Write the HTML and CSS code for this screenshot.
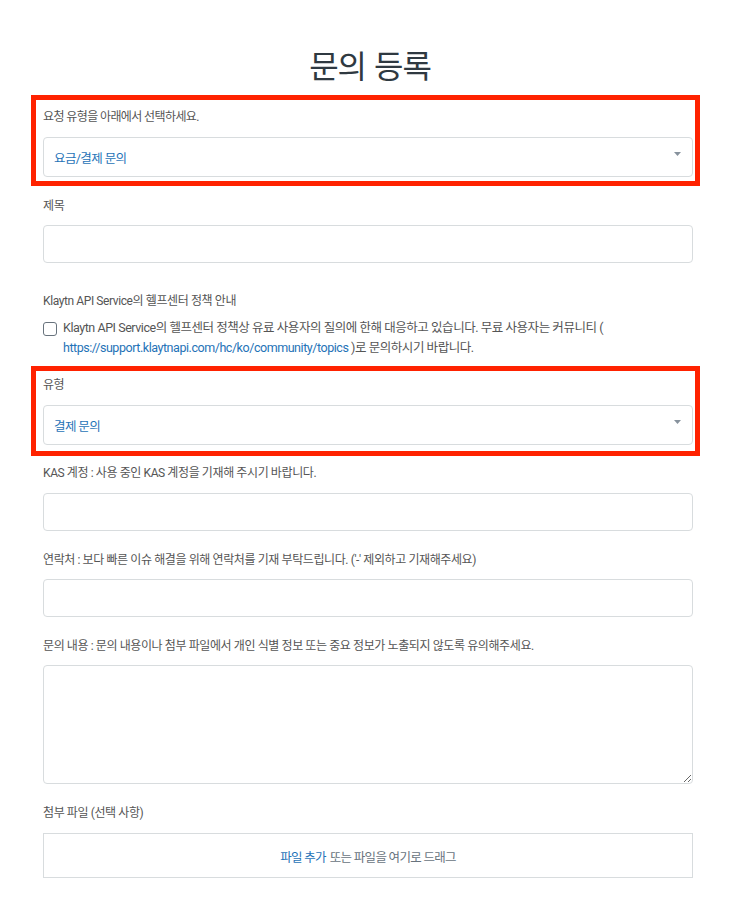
FILE: index.html
```html
<!DOCTYPE html>
<html lang="ko">
<head>
  <meta charset="UTF-8" />
  <meta name="viewport" content="width=device-width, initial-scale=1.0"/>
  <title>문의 등록</title>
  <link rel="stylesheet" href="styles.css">
</head>
<body>

  <h1 class="title">문의 등록</h1>

  <form class="request-form">

    <div class="field marked first-mark">
      <label class="field-label">요청 유형을 아래에서 선택하세요.</label>
      <div class="select">
        <span>요금/결제 문의</span>
        <svg class="caret" width="7" height="4" viewBox="0 0 7 4"><path d="M0 0h7L3.5 4z" fill="#87929d"/></svg>
      </div>
    </div>

    <div class="field after-mark">
      <label class="field-label">제목</label>
      <input type="text" class="text-input" />
    </div>

    <div class="field policy">
      <label class="field-label">Klaytn API Service의 헬프센터 정책 안내</label>
      <div class="check-row">
        <span class="checkbox"></span>
        <p class="check-text">Klaytn API Service의 헬프센터 정책상 유료 사용자의 질의에 한해 대응하고 있습니다. 무료 사용자는 커뮤니티 ( <a href="#">https://support.klaytnapi.com/hc/ko/community/topics</a> )로 문의하시기 바랍니다.</p>
      </div>
    </div>

    <div class="field marked second-mark">
      <label class="field-label">유형</label>
      <div class="select">
        <span>결제 문의</span>
        <svg class="caret" width="7" height="4" viewBox="0 0 7 4"><path d="M0 0h7L3.5 4z" fill="#87929d"/></svg>
      </div>
    </div>

    <div class="field after-mark">
      <label class="field-label">KAS 계정 : 사용 중인 KAS 계정을 기재해 주시기 바랍니다.</label>
      <input type="text" class="text-input" />
    </div>

    <div class="field">
      <label class="field-label">연락처 : 보다 빠른 이슈 해결을 위해 연락처를 기재 부탁드립니다. ('-' 제외하고 기재해주세요)</label>
      <input type="text" class="text-input" />
    </div>

    <div class="field">
      <label class="field-label">문의 내용 : 문의 내용이나 첨부 파일에서 개인 식별 정보 또는 중요 정보가 노출되지 않도록 유의해주세요.</label>
      <textarea class="text-area"></textarea>
    </div>

    <div class="field">
      <label class="field-label attach-label">첨부 파일 (선택 사항)</label>
      <div class="dropzone"><a href="#">파일 추가</a> 또는 파일을 여기로 드래그</div>
    </div>

  </form>

</body>
</html>
```

FILE: styles.css
```css
body {
  font-family: Roboto, "Noto Sans CJK KR", sans-serif;
  background-color: #ffffff;
  color: #555555;
  margin: 0;
}

.title {
  font-family: "Noto Sans CJK KR", sans-serif;
  font-size: 32px;
  font-weight: 400;
  letter-spacing: -1px;
  line-height: 40px;
  color: #2f3941;
  text-align: center;
  margin: 44px 0 11px;
  padding-right: 10px;
}

.request-form {
  width: 650px;
  margin-left: 43px;
  display: flex;
  flex-direction: column;
}

.field {
  display: flex;
  flex-direction: column;
  margin-top: 20px;
}

.field-label {
  font-size: 12px;
  letter-spacing: -0.4px;
  line-height: 18px;
  margin-bottom: 10px;
}

.policy .field-label {
  margin-bottom: 8px;
}

.marked {
  border: 5px solid #ff2200;
  margin-left: -12px;
  margin-right: -7px;
  padding: 8px 2px 4px 7px;
}

.marked .field-label {
  margin-bottom: 11px;
  letter-spacing: -0.6px;
}

.first-mark {
  margin-top: 0;
}

.second-mark {
  margin-top: 8px;
  padding-top: 5px;
  padding-bottom: 6px;
}

.after-mark {
  margin-top: 11px;
}

.second-mark + .after-mark {
  margin-top: 8px;
}

.second-mark + .after-mark .field-label {
  margin-bottom: 11px;
}

.select {
  height: 40px;
  box-sizing: border-box;
  border: 1px solid #d8dcde;
  border-radius: 4px;
  padding: 0 10px;
  display: flex;
  align-items: center;
  justify-content: space-between;
  color: #1f73b7;
  font-size: 12.5px;
  letter-spacing: -0.6px;
}

.caret {
  margin-top: -6px;
  margin-right: 1px;
}

.text-input {
  height: 38px;
  box-sizing: border-box;
  border: 1px solid #d8dcde;
  border-radius: 4px;
  margin: 0;
}

.policy {
  margin-top: 29px;
}

.check-row {
  display: flex;
  align-items: flex-start;
}

.checkbox {
  flex: none;
  width: 12px;
  height: 12px;
  border: 1px solid #68737d;
  border-radius: 3px;
  margin: 4px 6px 0 0;
}

.check-text {
  margin: 0;
  font-size: 12.5px;
  letter-spacing: -0.45px;
  line-height: 20px;
  color: #555555;
}

.check-text a {
  color: #1f73b7;
  text-decoration: none;
}

.text-area {
  height: 119px;
  box-sizing: border-box;
  border: 1px solid #d8dcde;
  border-radius: 4px;
  margin: 0;
  resize: vertical;
}

.attach-label {
  margin-bottom: 11px;
}

.dropzone {
  height: 45px;
  box-sizing: border-box;
  border: 1px solid #d8dcde;
  display: flex;
  align-items: center;
  justify-content: center;
  font-size: 12.5px;
  letter-spacing: -0.7px;
  color: #68737d;
  padding-top: 2px;
}

.dropzone a {
  color: #1f73b7;
  text-decoration: none;
  margin-right: 4px;
}
```
